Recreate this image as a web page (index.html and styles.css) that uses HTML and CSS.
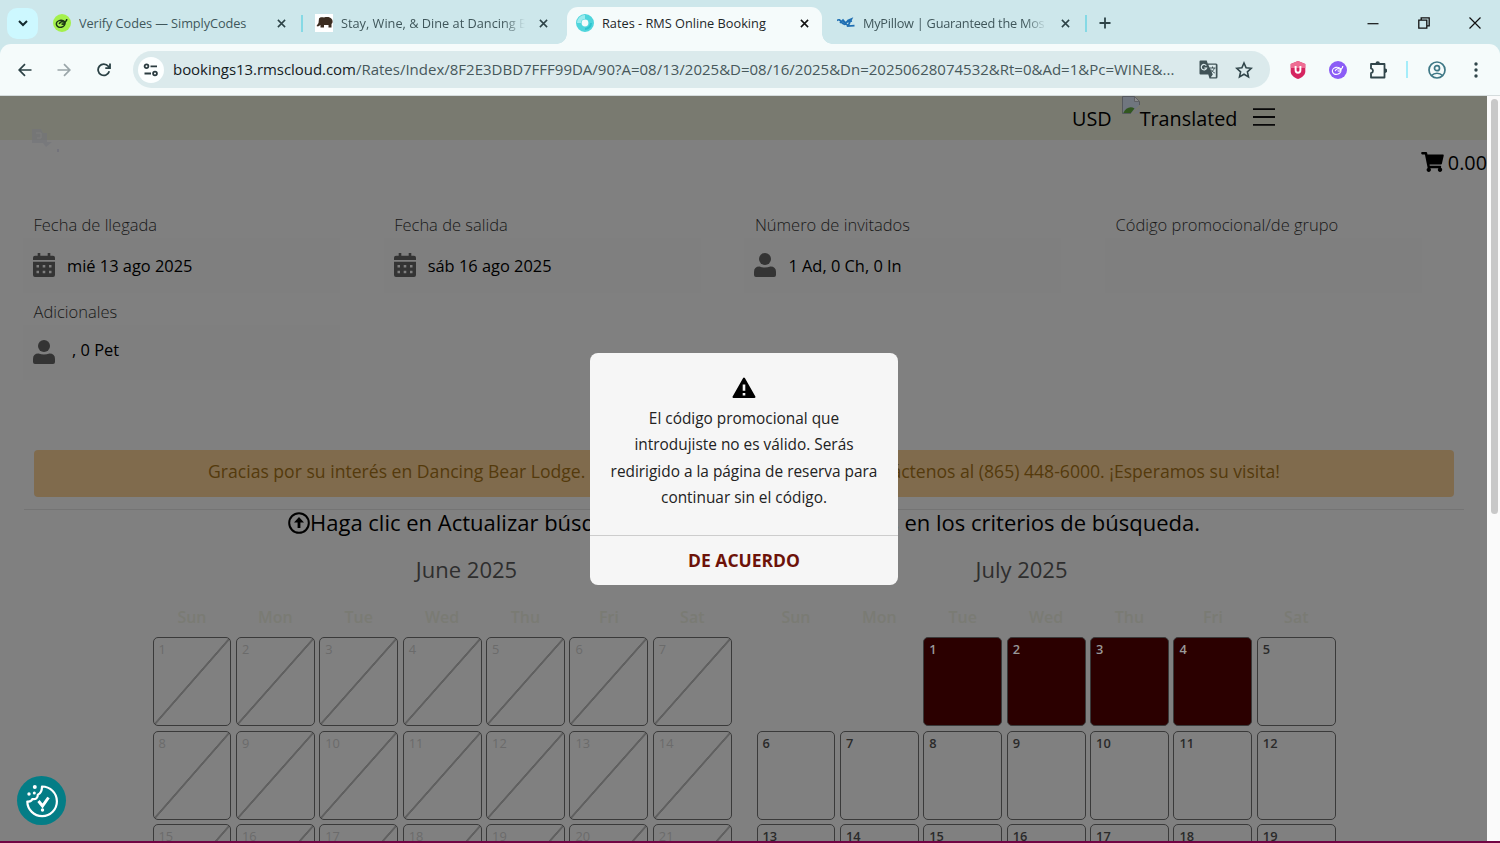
FILE: index.html
```html
<!DOCTYPE html>
<html lang="es">
<head>
    <meta charset="UTF-8">
    <meta name="viewport" content="width=device-width, initial-scale=1.0">
    <title>Rates - RMS Online Booking</title>
    <link rel="stylesheet" href="styles.css">
</head>
<body>
    <div class="tabs">
        <div class="tab-search">
            <svg width="12" height="12" viewBox="0 0 12 12"><path d="M2 4l4 4 4-4" fill="none" stroke="#14292d" stroke-width="2"/></svg>
        </div>
        <div class="tab tab-1">
            <svg class="favicon" viewBox="0 0 18 18"><circle cx="9" cy="9" r="9" fill="#a4f04c"/><g transform="rotate(-12 9 9)" fill="none" stroke="#1b3515" stroke-width="1.500"><ellipse cx="7.500" cy="9.500" rx="4.300" ry="3.500"/><path d="M6 9.500c1.500-2.500 4-2 5-1 1.500.5 3-.5 3.500-2.500M8.500 9.500c1 1.500 3 1 4-1"/></g></svg>
            <span class="tab-title">Verify Codes — SimplyCodes</span>
            <svg class="close" viewBox="0 0 10 10"><path d="M1 1l8 8M9 1l-8 8"/></svg>
        </div>
        <div class="tab-divider"></div>
        <div class="tab tab-2">
            <svg class="favicon" viewBox="0 0 18 18"><path fill="#fff" d="M0 0h18v18H0z"/><path fill="#3b2c20" d="M4 4.500c1-1.500 3-1.500 5-1 3-.8 6-.6 7.500 1.200 1.300 1.300 1.300 3.300.8 4.300l-.8 1v3.500h-3V11H9v2.500H5.500V11L3 12.500l-1.500-.5 2-3z"/></svg>
            <span class="tab-title fade">Stay, Wine, &amp; Dine at Dancing B</span>
            <svg class="close" viewBox="0 0 10 10"><path d="M1 1l8 8M9 1l-8 8"/></svg>
        </div>
        <div class="tab tab-3 active">
            <svg class="favicon" viewBox="0 0 18 18"><circle cx="9" cy="9" r="6.200" fill="none" stroke="#4fd5dc" stroke-width="5.600"/><path d="M3 9a6 6 0 0 1 6-6" fill="none" stroke="#9cebee" stroke-width="4"/><path d="M15 9a6 6 0 0 1-6 6" fill="none" stroke="#2cc4cf" stroke-width="2"/></svg>
            <span class="tab-title">Rates - RMS Online Booking</span>
            <svg class="close" viewBox="0 0 10 10"><path d="M1 1l8 8M9 1l-8 8"/></svg>
        </div>
        <div class="tab tab-4">
            <svg class="favicon" viewBox="0 0 18 18"><path d="M0 6.500c2-1.500 3-.5 4 1 1.500 2.500 3 3.500 5 2.500M5.500 6c1.500 3.500 4 3 5.500.5l3.500-1.500-3.500 7 6.500-.3M8 8.500l7-1.500M3 9l3-3 5 6" fill="none" stroke="#1f6fb3" stroke-width="1.700"/></svg>
            <span class="tab-title fade">MyPillow | Guaranteed the Mos</span>
            <svg class="close" viewBox="0 0 10 10"><path d="M1 1l8 8M9 1l-8 8"/></svg>
        </div>
        <div class="tab-divider"></div>
        <svg class="new-tab" viewBox="0 0 12 12"><path d="M6 .5v11M.5 6h11" stroke="#2d4347" stroke-width="1.800"/></svg>
        <div class="window-buttons">
            <svg width="12" height="12" viewBox="0 0 12 12"><path d="M.5 6.700h11" stroke="#111" stroke-width="1.200"/></svg>
            <svg width="12" height="12" viewBox="0 0 12 12"><path d="M.8 3.200h8v8h-8zM3.200 3V.8h8v8H9" fill="none" stroke="#111" stroke-width="1.300"/></svg>
            <svg width="12" height="12" viewBox="0 0 12 12"><path d="M.5.500l11 11M11.500.500l-11 11" stroke="#111" stroke-width="1.200"/></svg>
        </div>
    </div>

    <div class="toolbar">
        <svg class="nav-back" viewBox="0 0 14 14"><path d="M13.500 7H1.500M7 1.200L1.200 7 7 12.800" fill="none" stroke="#2b4145" stroke-width="1.700"/></svg>
        <svg class="nav-forward" viewBox="0 0 14 14"><path d="M.5 7h12M7 1.200L12.800 7 7 12.800" fill="none" stroke="#9aa6a9" stroke-width="1.700"/></svg>
        <svg class="nav-reload" viewBox="0 0 14 14"><path d="M12.300 8.300A5.700 5.700 0 1 1 11.300 3.200L12.600 4.800M13 .5v4.700H8.300" fill="none" stroke="#2b4145" stroke-width="1.800"/></svg>
        <div class="address">
            <div class="site-info">
                <svg width="16" height="14" viewBox="0 0 16 14"><g fill="none" stroke="#2b3c40" stroke-width="1.800"><circle cx="3.500" cy="3.300" r="1.900"/><path d="M7.500 3.300H14M1.500 10.500H8"/><circle cx="12" cy="10.500" r="1.900"/></g></svg>
            </div>
            <span class="url"><b>bookings13.rmscloud.com</b>/Rates/Index/8F2E3DBD7FFF99DA/90?A=08/13/2025&amp;D=08/16/2025&amp;Dn=20250628074532&amp;Rt=0&amp;Ad=1&amp;Pc=WINE&amp;...</span>
            <svg class="translate" viewBox="0 0 19 19"><path d="M1.500.500h6.200l1 3h8.300q1.500 0 1.500 1.500v12q0 1.500-1.500 1.500H10.500l-1.200-4H1.500Q.5 14.500.5 13.500v-12Q.5.500 1.500.500z" fill="#405357"/><path d="M9.300 4.800h7.500v12.400h-5l2-2.700z" fill="#dbeaec"/><path d="M10.500 8h6M13.500 6.500V8M15.300 8c-.6 2.200-2 3.700-3.600 4.500M12 9.500c1 1.700 2.200 2.800 3.800 3.500" fill="none" stroke="#405357"/><path d="M7.300 5.700A2.700 2.700 0 1 0 7.600 8H5.200" fill="none" stroke="#dbeaec" stroke-width="1.200"/></svg>
            <svg class="star" viewBox="0 0 18 18"><path d="M9 2l2.100 4.800 5.200.5-3.900 3.500 1.100 5.100L9 13.200l-4.500 2.700 1.100-5.100-3.900-3.500 5.200-.5z" fill="none" stroke="#30454a" stroke-width="1.600"/></svg>
        </div>
        <svg class="ext-shield" viewBox="0 0 16 18"><path d="M8 0l7.300 3v7.500c0 3.500-3.300 6-7.300 7.500-4-1.500-7.300-4-7.300-7.500V3z" fill="#d5245f"/><path d="M8 0l7.300 3v4H.7V3z" fill="#ee6c93"/><path d="M5.600 5v4.300a2.400 2.400 0 0 0 4.800 0V5" fill="none" stroke="#fff" stroke-width="1.900"/></svg>
        <svg class="ext-simply" viewBox="0 0 18 18"><circle cx="9" cy="9" r="9" fill="#8b5cf6"/><g transform="rotate(-12 9 9)" fill="none" stroke="#fff" stroke-width="1.200"><ellipse cx="7.500" cy="9.500" rx="4.300" ry="3.500"/><path d="M6 9.500c1.500-2.500 4-2 5-1 1.500.5 3-.5 3.500-2.500M8.500 9.500c1 1.500 3 1 4-1"/></g></svg>
        <svg class="ext-puzzle" viewBox="0 0 18 18"><path d="M2 3h13.500v13.500H2v-4.300q2-.5 2-2.400T2 7.400z" fill="none" stroke="#30454a" stroke-width="1.800" stroke-linejoin="round"/><path d="M6.500 2.500a2.200 2.200 0 0 1 4.400 0zM16 7.500a2.200 2.200 0 0 1 0 4.400z" fill="#30454a"/></svg>
        <div class="toolbar-divider"></div>
        <svg class="profile" viewBox="0 0 18 18"><g fill="none" stroke="#3e7886" stroke-width="1.700"><circle cx="9" cy="9" r="8"/><circle cx="9" cy="7.200" r="2.500"/><path d="M3.500 14.500c3-3 8-3 11 0"/></g></svg>
        <svg class="dots" viewBox="0 0 4 16"><g fill="#30454a"><circle cx="2" cy="2" r="1.700"/><circle cx="2" cy="8" r="1.700"/><circle cx="2" cy="14" r="1.700"/></g></svg>
    </div>

    <div class="viewport">
        <div class="page">
            <div class="topbar">
                <svg class="loading" viewBox="0 0 30 28"><path d="M1 1h9l2 4h4v9h5l-6 5-3-4H1z" fill="#74757b"/><path d="M5 5h5v5H6" fill="none" stroke="#83838a"/><path d="M26 21h2v3h-2z" fill="#6c6c78"/></svg>
                <span class="currency">USD</span>
                <svg class="broken" viewBox="0 0 18 18"><path d="M1 1h11.500l5 5v3L9 17.500H1z" fill="#70767f"/><path d="M1.500 16.500c2-4.500 7-7 11-4L9 17H1.500z" fill="#31571f"/><path d="M12.500.500v5h5z" fill="#8a8a8a" stroke="#5e6064"/><path d="M12.500.500H.5v17H9M17.500 5.500V9" fill="none" stroke="#55585d"/><path d="M17.500 11.500v6H12z" fill="#74777c"/></svg>
                <span class="translated">Translated</span>
                <svg class="burger" viewBox="0 0 22 18"><path d="M0 1.200h22M0 9h22M0 16.800h22" stroke="#090909" stroke-width="1.800"/></svg>
            </div>

            <div class="cart">
                <svg width="23" height="20" viewBox="0 0 576 512"><path d="M528 301l47-208c4-15-8-29-23-29H159l-9-45C148 8 138 0 126 0H24C11 0 0 11 0 24v16c0 13 11 24 24 24h70l70 343c-17 10-28 28-28 49 0 31 25 56 56 56s56-25 56-56c0-16-7-30-17-40h210c-10 10-17 24-17 40 0 31 25 56 56 56s56-25 56-56c0-22-13-41-32-50l6-26c3-15-8-28-24-28H218l-6-32h293c11 0 21-8 23-19z"/></svg>
                <span>0.00</span>
            </div>

            <div class="search">
                <div class="field">
                    <label>Fecha de llegada</label>
                    <div class="box">
                        <svg class="calendar-icon" viewBox="0 0 22 24"><use href="#icon-calendar"/></svg>
                        <span>mié 13 ago 2025</span>
                    </div>
                </div>
                <div class="field">
                    <label>Fecha de salida</label>
                    <div class="box">
                        <svg class="calendar-icon" viewBox="0 0 22 24"><use href="#icon-calendar"/></svg>
                        <span>sáb 16 ago 2025</span>
                    </div>
                </div>
                <div class="field">
                    <label>Número de invitados</label>
                    <div class="box">
                        <svg class="user-icon" viewBox="0 0 22 24"><use href="#icon-user"/></svg>
                        <span>1 Ad, 0 Ch, 0 In</span>
                    </div>
                </div>
                <div class="field">
                    <label>Código promocional/de grupo</label>
                    <div class="box"></div>
                </div>
                <div class="field">
                    <label>Adicionales</label>
                    <div class="box extras">
                        <svg class="user-icon" viewBox="0 0 22 24"><use href="#icon-user"/></svg>
                        <span>, 0 Pet</span>
                    </div>
                </div>
            </div>

            <div class="notice">
                <span>Gracias por su interés en Dancing Bear Lodge.</span>
                <span>Contáctenos al (865) 448-6000. ¡Esperamos su visita!</span>
            </div>

            <div class="hint">
                <svg width="22" height="22" viewBox="0 0 22 22"><circle cx="11" cy="11" r="9.800" fill="none" stroke="#000" stroke-width="2"/><path d="M11 5l5 5.500h-3.600V16H9.600v-5.500H6z"/></svg>
                <span>Haga clic en Actualizar búsqueda</span>
                <span class="hint-end">cambios en los criterios de búsqueda.</span>
            </div>

            <div class="calendars">
                <div class="month past">
                    <h2>June 2025</h2>
                    <div class="grid weekdays"><span>Sun</span><span>Mon</span><span>Tue</span><span>Wed</span><span>Thu</span><span>Fri</span><span>Sat</span></div>
                    <div class="grid days">
                        <div class="day">1</div><div class="day">2</div><div class="day">3</div><div class="day">4</div><div class="day">5</div><div class="day">6</div><div class="day">7</div>
                        <div class="day">8</div><div class="day">9</div><div class="day">10</div><div class="day">11</div><div class="day">12</div><div class="day">13</div><div class="day">14</div>
                        <div class="day">15</div><div class="day">16</div><div class="day">17</div><div class="day">18</div><div class="day">19</div><div class="day">20</div><div class="day">21</div>
                    </div>
                </div>
                <div class="month upcoming">
                    <h2>July 2025</h2>
                    <div class="grid weekdays"><span>Sun</span><span>Mon</span><span>Tue</span><span>Wed</span><span>Thu</span><span>Fri</span><span>Sat</span></div>
                    <div class="grid days">
                        <div></div><div></div><div class="day booked">1</div><div class="day booked">2</div><div class="day booked">3</div><div class="day booked">4</div><div class="day">5</div>
                        <div class="day">6</div><div class="day">7</div><div class="day">8</div><div class="day">9</div><div class="day">10</div><div class="day">11</div><div class="day">12</div>
                        <div class="day">13</div><div class="day">14</div><div class="day">15</div><div class="day">16</div><div class="day">17</div><div class="day">18</div><div class="day">19</div>
                    </div>
                </div>
            </div>

            <div class="modal">
                <div class="modal-body">
                    <svg width="24" height="22" viewBox="0 0 24 22"><path d="M12 1.500L22.500 20h-21z" stroke="#000" stroke-width="2" stroke-linejoin="round"/><path d="M12 7.500v6.200M12 16v2.600" stroke="#f6f6f6" stroke-width="2.600"/></svg>
                    <p>El código promocional que<br>introdujiste no es válido. Serás<br>redirigido a la página de reserva para<br>continuar sin el código.</p>
                </div>
                <button class="modal-button">DE ACUERDO</button>
            </div>

            <div class="cookie">
                <svg width="34" height="34" viewBox="0 0 34 34"><path d="M17 2.500A14.800 14.800 0 1 1 2.300 17.500c3 .3 4.500-.6 5-2.500 3.500.6 5.600-1 5.500-4.200 3-1.300 4.200-4.500 4.200-8.300z" fill="none" stroke="#fff" stroke-width="2.200" stroke-linejoin="round"/><path d="M13.500 17l4 5 6-8.500" fill="none" stroke="#fff" stroke-width="3"/><g fill="#fff"><circle cx="9.800" cy="3" r="2"/><circle cx="4" cy="10" r="1.700"/><circle cx="9.300" cy="9" r="1.500"/><circle cx="17.500" cy="26" r="1.700"/></g></svg>
            </div>
        </div>
        <div class="scrollbar"><div class="thumb"></div></div>
    </div>

    <svg class="defs" width="0" height="0">
        <symbol id="icon-calendar" viewBox="0 0 22 24">
            <path fill-rule="evenodd" d="M4.700 0h2.600v2.700h7.400V0h2.600v2.700H20q2 0 2 2V7H0V4.700q0-2 2-2h2.700zM0 8.700h22V22q0 2-2 2H2q-2 0-2-2zM3.500 12v2.500H6V12zm6.200 0v2.500h2.600V12zm6.300 0v2.500h2.500V12zM3.500 17.800v2.500H6v-2.500zm6.200 0v2.500h2.600v-2.500zm6.300 0v2.500h2.500v-2.500z"/>
        </symbol>
        <symbol id="icon-user" viewBox="0 0 22 24">
            <circle cx="11" cy="6" r="6"/><path d="M0 21v-2q0-5.500 5.500-5.500 5.500 2 11 0Q22 13.500 22 19v3q0 2-2 2H2q-2 0-2-2z"/>
        </symbol>
    </svg>
</body>
</html>
```
FILE: styles.css
```css
* {
    box-sizing: border-box;
}
body {
    margin: 0;
    width: 1500px;
    height: 843px;
    overflow: hidden;
    display: flex;
    flex-direction: column;
    font-family: "Open Sans", "Noto Sans", sans-serif;
    background: #cde7eb;
    color: #000;
}
svg {
    display: block;
    flex: none;
}
.defs {
    position: absolute;
}

/* tab strip */
.tabs {
    height: 44px;
    flex: none;
    display: flex;
    align-items: center;
    padding: 2px 19px 0 7px;
    font-size: 12.75px;
    color: #40575b;
}
.tab-search {
    width: 31px;
    height: 31px;
    border-radius: 10px;
    background: #cdf8ff;
    display: flex;
    align-items: center;
    justify-content: center;
}
.tab {
    display: flex;
    align-items: center;
    height: 100%;
}
.tab-1 {
    width: 263px;
    padding: 0 15px;
    letter-spacing: -0.08px;
}
.tab-2 {
    width: 264px;
    padding: 0 19px 0 12px;
}
.tab-3 {
    width: 255px;
    padding: 0 13px 0 9px;
}
.tab-4 {
    width: 263px;
    padding: 0 15px;
    letter-spacing: -0.25px;
}
.tab.active {
    position: relative;
    align-self: flex-end;
    height: 37px;
    padding-bottom: 5px;
    border-radius: 11px 11px 0 0;
    background: #f5fbfb;
    color: #1d2629;
}
/* curved feet of the active tab */
.tab.active::before,
.tab.active::after {
    content: "";
    position: absolute;
    bottom: 0;
    width: 10px;
    height: 10px;
}
.tab.active::before {
    left: -10px;
    background: radial-gradient(circle at 0 0, transparent 9.5px, #f5fbfb 10px);
}
.tab.active::after {
    right: -10px;
    background: radial-gradient(circle at 100% 0, transparent 9.5px, #f5fbfb 10px);
}
.favicon {
    width: 18px;
    height: 18px;
    margin-right: 8px;
}
.tab-title {
    flex: 1;
    overflow: hidden;
    white-space: nowrap;
    margin-right: 14px;
}
.fade {
    -webkit-mask-image: linear-gradient(90deg, #000 88%, transparent);
    mask-image: linear-gradient(90deg, #000 88%, transparent);
}
.close {
    width: 9px;
    height: 9px;
    fill: none;
    stroke: #2d4347;
    stroke-width: 1.7;
}
.active .close {
    stroke: #111;
}
.tab-divider {
    width: 2px;
    height: 17px;
    background: #85d9e5;
}
.new-tab {
    width: 12px;
    height: 12px;
    margin-left: 12px;
}
.window-buttons {
    display: flex;
    gap: 39px;
    margin-left: auto;
}

/* toolbar */
.toolbar {
    height: 52px;
    flex: none;
    display: flex;
    align-items: center;
    padding: 0 22px 0 18px;
    background: #f5fbfb;
    border-radius: 11px 11px 0 0;
    border-bottom: 1px solid #d5dcdd;
}
.nav-back,
.nav-forward,
.nav-reload {
    width: 14px;
    height: 14px;
}
.nav-forward {
    margin-left: 25px;
}
.nav-reload {
    margin-left: 26px;
}
.address {
    width: 1137px;
    height: 37px;
    margin-left: 22px;
    padding: 0 17px 0 5px;
    border-radius: 19px;
    background: #dbeaec;
    display: flex;
    align-items: center;
}
.site-info {
    width: 26px;
    height: 26px;
    border-radius: 50%;
    background: #fcffff;
    display: flex;
    align-items: center;
    justify-content: center;
}
.url {
    flex: 1;
    margin-left: 9px;
    padding-bottom: 1px;
    font-size: 15px;
    white-space: nowrap;
    color: #47585b;
}
.url b {
    font-weight: 400;
    letter-spacing: -0.05px;
    color: #16211f;
}
.translate {
    width: 19px;
    height: 19px;
}
.star {
    width: 18px;
    height: 18px;
    margin-left: 17px;
}
.ext-shield {
    width: 16px;
    height: 18px;
    margin-left: 20px;
}
.ext-simply {
    width: 18px;
    height: 18px;
    margin-left: 23px;
}
.ext-puzzle {
    width: 18px;
    height: 18px;
    margin-left: 22px;
}
.toolbar-divider {
    width: 2px;
    height: 17px;
    margin-left: 19px;
    background: #a5edfa;
}
.profile {
    width: 18px;
    height: 18px;
    margin-left: 20px;
}
.dots {
    width: 4px;
    height: 16px;
    margin-left: auto;
}

/* page */
.viewport {
    flex: 1;
    min-height: 0;
    display: flex;
    border-bottom: 2px solid #720544;
}
.page {
    position: relative;
    width: 1487px;
    overflow: hidden;
    background: #808080;
}
.scrollbar {
    flex: 1;
    padding: 3px 2px 0 4px;
    background: #fafafa;
}
.thumb {
    width: 7px;
    height: 415px;
    border-radius: 4px;
    background: #c8c8c8;
}
.topbar {
    height: 44px;
    display: flex;
    align-items: flex-start;
    padding-left: 31px;
    background: #797a70;
    font-size: 19.8px;
    line-height: 45px;
}
.loading {
    width: 30px;
    height: 28px;
    margin-top: 32px;
    opacity: 0.6;
}
.currency {
    margin-left: 1011px;
}
.broken {
    width: 18px;
    height: 18px;
    margin-left: 10px;
}
.burger {
    width: 22px;
    height: 18px;
    margin: 12px 0 0 16px;
}
.cart {
    height: 44px;
    display: flex;
    align-items: center;
    justify-content: flex-end;
    gap: 4px;
    font-size: 19.8px;
}
.search {
    display: grid;
    grid-template-columns: repeat(4, 360.7px);
    row-gap: 6px;
    padding: 28px 0 0 23px;
}
.field label {
    display: block;
    padding-left: 10.5px;
    font-size: 16.5px;
    font-weight: 300;
    line-height: 26px;
    color: #181818;
}
.box {
    width: 317px;
    height: 55px;
    display: flex;
    align-items: center;
    gap: 12px;
    padding: 0 0 1px 10px;
    background: #7f7f7f;
    font-size: 16.4px;
}
.box svg {
    width: 22px;
    height: 24px;
    fill: #343434;
}
.extras {
    gap: 17px;
}
.extras span {
    padding-bottom: 6px;
}
.notice {
    display: flex;
    justify-content: space-between;
    width: 1420px;
    height: 47px;
    margin: 70px 0 0 34px;
    padding: 0 174px;
    border-radius: 4px;
    background: #806b4d;
    color: #543a0c;
    font-size: 17.6px;
    line-height: 43px;
    white-space: nowrap;
}
.hint {
    display: flex;
    align-items: center;
    width: 1440px;
    height: 29px;
    margin: 12px 0 0 24px;
    padding: 0 264px;
    border-top: 1px solid #747474;
    font-size: 22px;
    line-height: 24px;
    white-space: nowrap;
}
.hint span {
    padding-bottom: 5px;
}
.hint svg {
    margin-bottom: 3px;
}
.hint-end {
    margin-left: auto;
}
.calendars {
    display: flex;
    gap: 24px;
    padding-left: 152.5px;
}
.month {
    width: 580px;
}
.month h2 {
    margin: 14px 0 18px;
    font-size: 22px;
    font-weight: 400;
    line-height: 34px;
    text-align: center;
    color: #2e2e2e;
}
.past h2 {
    padding-left: 48px;
}
.upcoming h2 {
    padding-right: 50px;
}
.grid {
    display: grid;
    grid-template-columns: repeat(7, 78.9px);
    gap: 4.5px;
}
.weekdays {
    height: 33px;
    font-size: 16px;
    font-weight: 600;
    line-height: 26px;
    text-align: center;
    color: #7a7b74;
}
.day {
    height: 89px;
    padding: 3px 5px;
    border: 1px solid #3a3a3a;
    border-radius: 5px;
    font-size: 12.8px;
    font-weight: 600;
    line-height: 17px;
    color: #2a2a2a;
}
.past .day {
    font-weight: 500;
    color: #6b6b6b;
    background: linear-gradient(to bottom right, transparent calc(50% - 1.3px), #606060 calc(50% - 0.7px), #606060 calc(50% + 0.7px), transparent calc(50% + 1.3px));
}
.month .booked {
    background: #2b0000;
    color: #999;
}

/* dialog */
.modal {
    position: absolute;
    top: 257px;
    left: 590px;
    width: 308px;
    height: 232px;
    display: flex;
    flex-direction: column;
    border-radius: 8px;
    background: #f6f6f6;
}
.modal-body {
    flex: 1;
    display: flex;
    flex-direction: column;
    align-items: center;
    padding: 24px 10px 0;
}
.modal-body p {
    margin: 7px 0 0;
    font-size: 15.4px;
    line-height: 26.4px;
    text-align: center;
    white-space: nowrap;
    color: #222;
}
.modal-button {
    height: 50px;
    padding: 0 0 2px;
    border: 0;
    border-top: 1px solid #cdcdcd;
    background: none;
    font-family: inherit;
    font-size: 17.5px;
    font-weight: 700;
    color: #6d1209;
}
.cookie {
    position: absolute;
    top: 680px;
    left: 17px;
    width: 49px;
    height: 49px;
    display: flex;
    align-items: center;
    justify-content: center;
    border-radius: 50%;
    background: #047d86;
}
```
